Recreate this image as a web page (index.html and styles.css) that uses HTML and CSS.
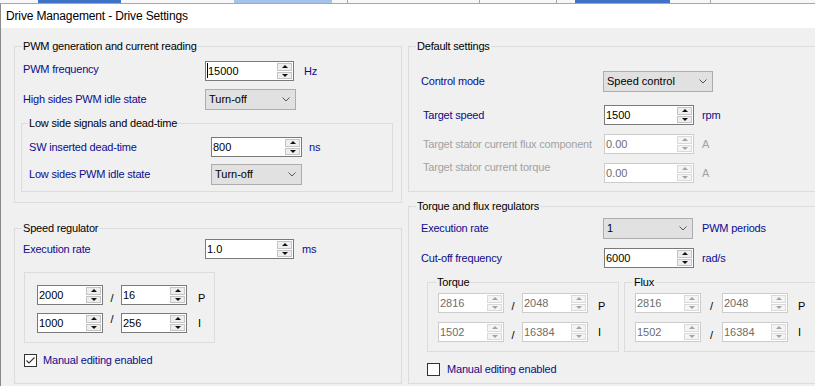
FILE: index.html
```html
<!DOCTYPE html>
<html>
<head>
<meta charset="utf-8">
<link rel="stylesheet" href="styles.css">
</head>
<body>
<div class="strip">
  <i class="b1"></i><i class="ln l1"></i><i class="ln l2"></i><i class="b2"></i><i class="ln l3"></i><i class="ln l4"></i><i class="ln l5"></i><i class="b3"></i><i class="ln l6"></i>
</div>
<div class="window">
  <div class="titlebar">Drive Management - Drive Settings</div>
  <div class="client">
    <div class="col col-left">
      <div class="group g-pwm">
        <div class="legend">PWM generation and current reading</div>
        <div class="row p1">
          <span class="lbl w-pwm raise">PWM frequency</span>
          <div class="num w89"><span class="val"><i class="caret"></i>15000</span><span class="spin"><b class="up"></b><b class="dn"></b></span></div>
          <span class="unit u10">Hz</span>
        </div>
        <div class="row p2">
          <span class="lbl w-pwm">High sides PWM idle state</span>
          <div class="combo w91"><span class="txt">Turn-off</span><svg class="chev" width="8" height="5" viewBox="0 0 8 5"><polyline points="0.5,0.5 4,4 7.5,0.5"/></svg></div>
        </div>
        <div class="group g-low">
          <div class="legend lg-low">Low side signals and dead-time</div>
          <div class="row l1">
            <span class="lbl w-low">SW inserted dead-time</span>
            <div class="num w91"><span class="val">800</span><span class="spin"><b class="up"></b><b class="dn"></b></span></div>
            <span class="unit u7">ns</span>
          </div>
          <div class="row l2">
            <span class="lbl w-low">Low sides PWM idle state</span>
            <div class="combo w91"><span class="txt">Turn-off</span><svg class="chev" width="8" height="5" viewBox="0 0 8 5"><polyline points="0.5,0.5 4,4 7.5,0.5"/></svg></div>
          </div>
        </div>
      </div>

      <div class="group g-speed">
        <div class="legend">Speed regulator</div>
        <div class="row s1">
          <span class="lbl w-pwm">Execution rate</span>
          <div class="num w89"><span class="val">1.0</span><span class="spin"><b class="up"></b><b class="dn"></b></span></div>
          <span class="unit u8">ms</span>
        </div>
        <div class="group g-pi">
          <div class="row pi1">
            <div class="num w66"><span class="val">2000</span><span class="spin"><b class="up"></b><b class="dn"></b></span></div>
            <span class="slash low">/</span>
            <div class="num w66"><span class="val">16</span><span class="spin"><b class="up"></b><b class="dn"></b></span></div>
            <span class="pi-l low">P</span>
          </div>
          <div class="row pi2">
            <div class="num w66"><span class="val">1000</span><span class="spin"><b class="up"></b><b class="dn"></b></span></div>
            <span class="slash high">/</span>
            <div class="num w66"><span class="val">256</span><span class="spin"><b class="up"></b><b class="dn"></b></span></div>
            <span class="pi-l">I</span>
          </div>
        </div>
        <div class="row chk chk-left">
          <span class="cb"><svg width="11" height="11" viewBox="0 0 11 11"><polyline points="1.5,5.5 4,8 9.5,2.5"/></svg></span>
          <span class="lbl">Manual editing enabled</span>
        </div>
      </div>
    </div>

    <div class="col col-right">
      <div class="group g-default">
        <div class="legend">Default settings</div>
        <div class="row d1">
          <span class="lbl w-d1">Control mode</span>
          <div class="combo w110"><span class="txt">Speed control</span><svg class="chev" width="8" height="5" viewBox="0 0 8 5"><polyline points="0.5,0.5 4,4 7.5,0.5"/></svg></div>
        </div>
        <div class="row d2">
          <span class="lbl w-d2">Target speed</span>
          <div class="num w90"><span class="val">1500</span><span class="spin"><b class="up"></b><b class="dn"></b></span></div>
          <span class="unit u8">rpm</span>
        </div>
        <div class="row d3">
          <span class="lbl dis w-d2">Target stator current flux component</span>
          <div class="num dis w90"><span class="val">0.00</span><span class="spin"><b class="up"></b><b class="dn"></b></span></div>
          <span class="unit dis u8">A</span>
        </div>
        <div class="row d4">
          <span class="lbl dis w-d2 top">Target stator current torque</span>
          <div class="num dis w90"><span class="val">0.00</span><span class="spin"><b class="up"></b><b class="dn"></b></span></div>
          <span class="unit dis u8">A</span>
        </div>
      </div>

      <div class="group g-tf">
        <div class="legend">Torque and flux regulators</div>
        <div class="row t1">
          <span class="lbl w-d1">Execution rate</span>
          <div class="combo w90"><span class="txt">1</span><svg class="chev" width="8" height="5" viewBox="0 0 8 5"><polyline points="0.5,0.5 4,4 7.5,0.5"/></svg></div>
          <span class="unit u9">PWM periods</span>
        </div>
        <div class="row t2">
          <span class="lbl w-t2">Cut-off frequency</span>
          <div class="num w90"><span class="val">6000</span><span class="spin"><b class="up"></b><b class="dn"></b></span></div>
          <span class="unit u8">rad/s</span>
        </div>
        <div class="boxes">
          <div class="group g-sub">
            <div class="legend lg-sub">Torque</div>
            <div class="row sb1">
              <div class="num dis w66"><span class="val">2816</span><span class="spin"><b class="up"></b><b class="dn"></b></span></div>
              <span class="slash low">/</span>
              <div class="num dis w66"><span class="val">2048</span><span class="spin"><b class="up"></b><b class="dn"></b></span></div>
              <span class="pi-l low">P</span>
            </div>
            <div class="row sb2">
              <div class="num dis w66"><span class="val">1502</span><span class="spin"><b class="up"></b><b class="dn"></b></span></div>
              <span class="slash low">/</span>
              <div class="num dis w66"><span class="val">16384</span><span class="spin"><b class="up"></b><b class="dn"></b></span></div>
              <span class="pi-l">I</span>
            </div>
          </div>
          <div class="group g-sub">
            <div class="legend lg-sub">Flux</div>
            <div class="row sb1">
              <div class="num dis w66"><span class="val">2816</span><span class="spin"><b class="up"></b><b class="dn"></b></span></div>
              <span class="slash wide low">/</span>
              <div class="num dis w66"><span class="val">2048</span><span class="spin"><b class="up"></b><b class="dn"></b></span></div>
              <span class="pi-l low">P</span>
            </div>
            <div class="row sb2">
              <div class="num dis w66"><span class="val">1502</span><span class="spin"><b class="up"></b><b class="dn"></b></span></div>
              <span class="slash wide low">/</span>
              <div class="num dis w66"><span class="val">16384</span><span class="spin"><b class="up"></b><b class="dn"></b></span></div>
              <span class="pi-l">I</span>
            </div>
          </div>
        </div>
        <div class="row chk chk-right">
          <span class="cb"></span>
          <span class="lbl">Manual editing enabled</span>
        </div>
      </div>
    </div>
  </div>
</div>
</body>
</html>
```

FILE: styles.css
```css
* { box-sizing: border-box; }
html, body { margin: 0; padding: 0; }
body {
  width: 815px;
  height: 386px;
  overflow: hidden;
  background: #ffffff;
  font-family: "Liberation Sans", Arial, sans-serif;
  font-size: 11px;
  line-height: 13px;
  color: #000000;
}

/* strip of the window behind */
.strip { height: 3px; display: flex; background: #f7f7f7; }
.strip i { display: block; height: 3px; flex-shrink: 0; }
.strip .b1 { margin-left: 38px; width: 83px; background: #3f73c6; }
.strip .ln { width: 1px; background: #a9a9a9; }
.strip .l1 { margin-left: 25px; }
.strip .l2 { margin-left: 72px; }
.strip .b2 { margin-left: 14px; width: 98px; background: #a7c2ea; }
.strip .l3 { margin-left: 15px; }
.strip .l4 { margin-left: 131px; }
.strip .l5 { margin-left: 76px; }
.strip .b3 { margin-left: 18px; width: 95px; background: #3f73c6; }
.strip .l6 { margin-left: 40px; }

.window {
  height: 383px;
  border-left: 1px solid #8a8a8a;
  border-top: 1px solid #a8a8a8;
  display: flex;
  flex-direction: column;
}
.titlebar {
  height: 24px;
  flex-shrink: 0;
  background: #ffffff;
  padding-left: 5px;
  font-size: 12px;
  line-height: 24px;
  letter-spacing: -0.15px;
  color: #000;
}
.client {
  flex: 1;
  background: #f0f0f0;
  display: flex;
  gap: 6px;
  padding: 18px 0 0 13px;
}
.col { display: flex; flex-direction: column; flex-shrink: 0; }
.col-left { width: 388px; }
.col-right { width: 420px; }

/* group boxes */
.group { border: 1px solid #dcdcdc; flex-shrink: 0; }
.legend {
  width: max-content;
  height: 13px;
  margin: -7px 0 -6px 7px;
  padding: 0 1px;
  background: #f0f0f0;
  color: #000;
  letter-spacing: -0.2px;
}
.g-pwm { height: 157px; }
.g-low { height: 69px; margin: 13px 8px 0 6px; }
.lg-low { margin-left: 6px; }
.g-speed { height: 156px; margin-top: 25px; }
.g-pi { width: 191px; height: 71px; margin: 13px 0 0 9px; }
.g-default { height: 146px; }
.g-tf { height: 178px; margin-top: 14px; }
.boxes { display: flex; gap: 5px; margin: 14px 0 0 18px; }
.g-sub { width: 192px; height: 70px; }
.lg-sub { margin-left: 8px; }

/* rows */
.row { display: flex; align-items: center; }
.lbl { color: #0c0c8e; white-space: nowrap; flex-shrink: 0; letter-spacing: -0.2px; }
.lbl.dis, .unit.dis { color: #a2a2a2; }
.unit { color: #0c0c8e; white-space: nowrap; letter-spacing: -0.2px; }
.u7 { margin-left: 7px; }
.u8 { margin-left: 8px; }
.u9 { margin-left: 9px; }
.u10 { margin-left: 10px; }

.w-pwm { padding-left: 8px; width: 190px; }
.w-low { padding-left: 7px; width: 189px; }
.w-d1 { padding-left: 12px; width: 194px; }
.w-d2 { padding-left: 14px; width: 195px; }
.w-t2 { padding-left: 12px; width: 195px; }
.top { align-self: flex-start; margin-top: -2px; }
.raise { align-self: flex-start; margin-top: 2px; }

.p1 { margin-top: 14px; }
.p2 { margin-top: 8px; }
.l1 { margin-top: 13px; }
.l2 { margin-top: 7px; }
.s1 { margin-top: 10px; }
.pi1 { margin-top: 12px; padding-left: 12px; }
.pi2 { margin-top: 8px; padding-left: 12px; }
.chk { margin-top: 11px; }
.chk-left { margin-left: 9px; }
.chk-right { margin-left: 18px; }
.chk-left .lbl { margin-left: 6px; }
.chk-right .lbl { margin-left: 7px; }
.d1 { margin-top: 24px; }
.d2 { margin-top: 13px; }
.d3 { margin-top: 9px; }
.d4 { margin-top: 9px; }
.t1 { margin-top: 11px; }
.t2 { margin-top: 9px; }
.sb1 { margin-top: 10px; padding-left: 10px; }
.sb2 { margin-top: 9px; padding-left: 10px; }

/* numeric up-down */
.num {
  display: flex;
  height: 20px;
  border: 1px solid #7a7a7a;
  background: #ffffff;
  flex-shrink: 0;
}
.w66 { width: 66px; }
.w89 { width: 89px; }
.w90 { width: 90px; }
.w91 { width: 91px; }
.w110 { width: 110px; }
.num .val {
  flex: 1;
  padding: 2px 0 0 1px;
  line-height: 14px;
  white-space: nowrap;
  overflow: hidden;
  display: flex;
  align-items: flex-start;
}
.caret { display: block; width: 1px; height: 15px; background: #000; margin-top: -1px; }
.spin {
  width: 16px;
  display: flex;
  flex-direction: column;
  gap: 1px;
  padding: 1px 1px 1px 0;
  flex-shrink: 0;
}
.spin b {
  flex: 1;
  display: flex;
  align-items: center;
  justify-content: center;
  background: #eeeeee;
  border: 1px solid #c4c4c4;
}
.spin b::after {
  content: "";
  display: block;
  width: 0;
  height: 0;
  border-left: 3px solid transparent;
  border-right: 3px solid transparent;
}
.spin .up::after { border-bottom: 3px solid #111; }
.spin .dn::after { border-top: 3px solid #111; }
.num.dis { border-color: #cccccc; color: #6d6d6d; }
.num.dis .spin b { background: #f4f4f4; border-color: #dadada; }
.num.dis .spin .up::after { border-bottom-color: #a3a3a3; }
.num.dis .spin .dn::after { border-top-color: #a3a3a3; }

/* combo box */
.combo {
  display: flex;
  align-items: center;
  height: 21px;
  border: 1px solid #adadad;
  background: #e1e1e1;
  padding-left: 3px;
  flex-shrink: 0;
}
.combo .txt { flex: 1; white-space: nowrap; }
.chev { margin-right: 5px; }
.chev polyline { fill: none; stroke: #555; stroke-width: 1; }

/* slash / P / I */
.slash { width: 18px; text-align: center; flex-shrink: 0; }
.slash.wide { width: 21px; }
.low { align-self: flex-end; }
.high { align-self: flex-start; }
.pi-l { margin-left: 11px; }
.g-sub .pi-l { margin-left: 10px; }

/* checkbox */
.cb {
  width: 13px;
  height: 13px;
  border: 1px solid #333333;
  background: #ffffff;
  flex-shrink: 0;
  display: flex;
}
.cb svg polyline { fill: none; stroke: #333; stroke-width: 1.1; }
```
